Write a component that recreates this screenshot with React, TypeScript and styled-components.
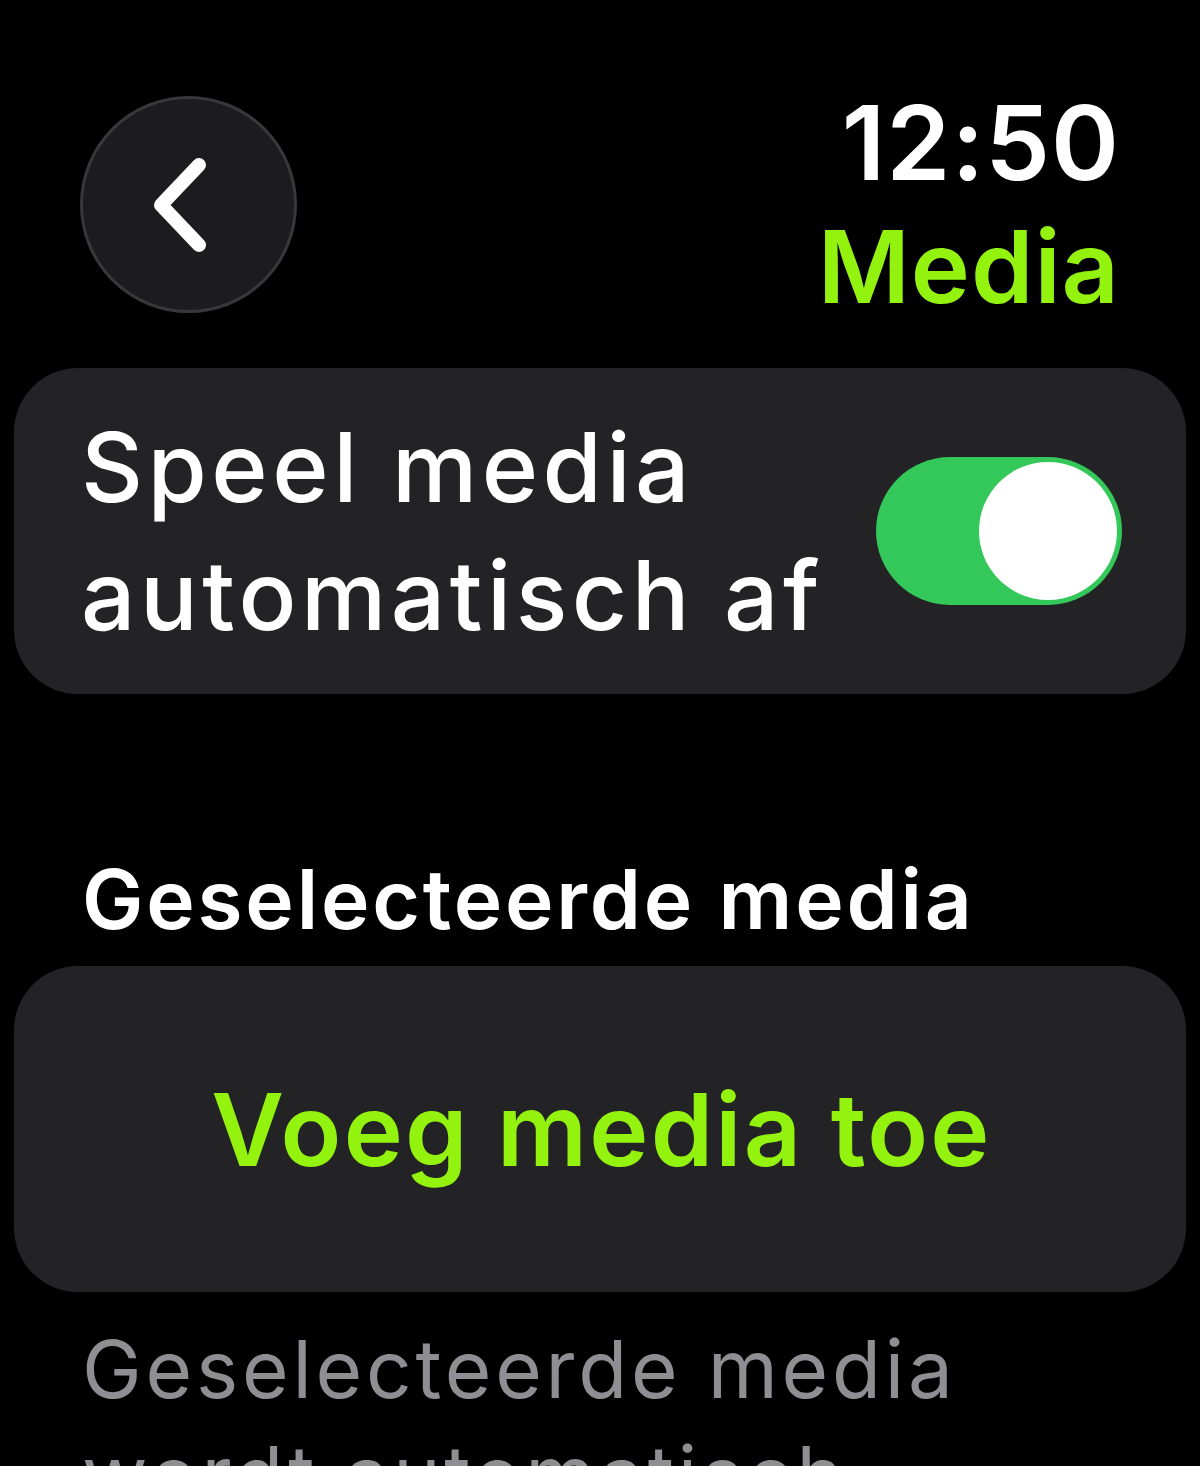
import styled, { createGlobalStyle } from 'styled-components'

const GREEN = '#94f20f'

const GlobalStyle = createGlobalStyle`
  html, body {
    margin: 0;
    padding: 0;
    background: #000;
  }
  body {
    font-family: Inter, "Noto Sans", "Liberation Sans", sans-serif;
    color: #fff;
    overflow: hidden;
  }
`

const Screen = styled.div`
  width: 1200px;
  height: 1466px;
  overflow: hidden;
  background: #000;
  display: flex;
  flex-direction: column;

  & > * {
    flex-shrink: 0;
  }
`

const Header = styled.div`
  display: flex;
  justify-content: space-between;
  align-items: flex-start;
  padding: 96px 80px 0 80px;
  height: 272px;
`

const BackButton = styled.button`
  width: 217px;
  height: 217px;
  border-radius: 50%;
  background: #1c1c1e;
  border: 3px solid #38383a;
  display: flex;
  align-items: center;
  justify-content: center;
  padding: 0 14px 0 0;
  cursor: pointer;
`

const TitleBlock = styled.div`
  display: flex;
  flex-direction: column;
  align-items: flex-end;
  margin-top: -17px;
`

const Clock = styled.span`
  font-size: 103px;
  font-weight: 600;
  line-height: 128px;
  letter-spacing: 1px;
`

const Title = styled.span`
  font-size: 100px;
  font-weight: 600;
  line-height: 120px;
  color: ${GREEN};
  letter-spacing: 1px;
`

const Card = styled.div<{ $center?: boolean }>`
  margin: 0 14px;
  background: #232325;
  border-radius: 64px;
  display: flex;
  align-items: center;
  justify-content: ${(p) => (p.$center ? 'center' : 'space-between')};
  padding: 0 64px 0 67px;
  height: 326px;
`

const CardLabel = styled.span`
  font-size: 96px;
  font-weight: 500;
  line-height: 128px;
  letter-spacing: 4.5px;
`

const Toggle = styled.div<{ $on: boolean }>`
  width: 246px;
  height: 148px;
  border-radius: 74px;
  background: ${(p) => (p.$on ? '#34c759' : '#39393d')};
  display: flex;
  align-items: center;
  justify-content: ${(p) => (p.$on ? 'flex-end' : 'flex-start')};
  padding: 0 5px;
  box-sizing: border-box;
  flex-shrink: 0;
`

const Knob = styled.div`
  width: 138px;
  height: 138px;
  border-radius: 50%;
  background: #fff;
`

const SectionHeader = styled.div`
  padding: 0 82px;
  margin-top: 156px;
  height: 116px;
  font-size: 82px;
  font-weight: 600;
  line-height: 100px;
  letter-spacing: 2.8px;
`

const ActionText = styled.span`
  font-size: 100px;
  font-weight: 600;
  letter-spacing: 2.2px;
  color: ${GREEN};
`

const Footnote = styled.div`
  padding: 24px 82px 0;
  font-size: 80px;
  font-weight: 400;
  line-height: 106px;
  color: #8e8e93;
  letter-spacing: 3.8px;
`

const App = () => {
  return (
    <Screen>
      <GlobalStyle />
      <Header>
        <BackButton aria-label="Terug">
          <svg width="70" height="100" viewBox="0 0 70 100">
            <path
              d="M52 10 L14 50 L52 90"
              fill="none"
              stroke="#fff"
              strokeWidth="14"
              strokeLinecap="round"
              strokeLinejoin="round"
            />
          </svg>
        </BackButton>
        <TitleBlock>
          <Clock>12:50</Clock>
          <Title>Media</Title>
        </TitleBlock>
      </Header>
      <Card>
        <CardLabel>
          Speel media
          <br />
          automatisch af
        </CardLabel>
        <Toggle $on>
          <Knob />
        </Toggle>
      </Card>
      <SectionHeader>Geselecteerde media</SectionHeader>
      <Card $center>
        <ActionText>Voeg media toe</ActionText>
      </Card>
      <Footnote>
        Geselecteerde media
        <br />
        wordt automatisch
      </Footnote>
    </Screen>
  )
}

export default App
